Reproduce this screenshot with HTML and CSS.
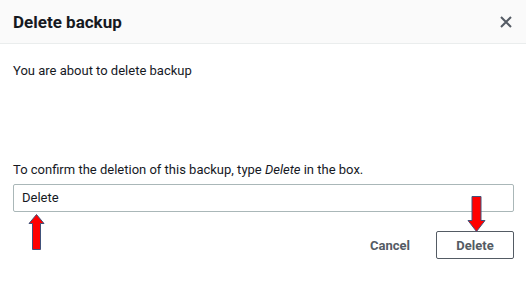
FILE: index.html
```html
<!DOCTYPE html>
<html>
<head>
<meta charset="utf-8">
<link rel="stylesheet" href="styles.css">
</head>
<body>
<div class="modal">
  <div class="header">
    <h2 class="title">Delete backup</h2>
    <button class="close" aria-label="Close">
      <svg width="12" height="12" viewBox="0 0 12 12"><path d="M1 1 L11 11 M11 1 L1 11" stroke="#545b64" stroke-width="2" fill="none"/></svg>
    </button>
  </div>
  <div class="content">
    <p class="intro">You are about to delete backup</p>
    <p class="confirm">To confirm the deletion of this backup, type <em>Delete</em> in the box.</p>
    <div class="field">
      <div class="input">Delete</div>
      <svg class="arrow arrow-up" width="17" height="36" viewBox="0 0 17 36"><path d="M8.5 0.5 L16 9.5 L12.5 9.5 L12.5 35.5 L4.5 35.5 L4.5 9.5 L1 9.5 Z" fill="#ff0000" stroke="#41527a" stroke-width="1"/></svg>
    </div>
    <div class="actions">
      <button class="btn-link">Cancel</button>
      <div class="btn-wrap">
        <button class="btn">Delete</button>
        <svg class="arrow arrow-down" width="19" height="36" viewBox="0 0 19 36"><path d="M9.5 35.5 L18 24.5 L14 24.5 L14 0.5 L5 0.5 L5 24.5 L1 24.5 Z" fill="#ff0000" stroke="#41527a" stroke-width="1"/></svg>
      </div>
    </div>
  </div>
</div>
</body>
</html>
```

FILE: styles.css
```css
* { box-sizing: border-box; }
html, body { margin: 0; padding: 0; background: #ffffff; }
body {
  font-family: Roboto, "Liberation Sans", sans-serif;
  color: #16191f;
  font-size: 13px;
}
.modal { width: 526px; height: 294px; }
.header {
  height: 44px;
  background: #fafafa;
  border-bottom: 1px solid #eaeded;
  display: flex;
  align-items: center;
  justify-content: space-between;
  padding: 0 14px 0 13px;
}
.title {
  margin: 0;
  font-size: 17px;
  font-weight: 700;
  line-height: 22px;
}
.close {
  border: 0;
  background: none;
  padding: 0;
  width: 12px;
  height: 12px;
  display: flex;
  cursor: pointer;
}
.content { padding: 0 12px 0 13px; }
.intro { margin: 0; padding-top: 17px; line-height: 20px; height: 116px; }
.confirm { margin: 0; line-height: 20px; height: 24px; }
.field { position: relative; }
.input {
  height: 28px;
  border: 1px solid #aab7b8;
  border-radius: 2px;
  padding: 0 8px;
  line-height: 26px;
}
.arrow { position: absolute; }
.arrow-up { left: 15px; top: 30px; }
.actions {
  display: flex;
  justify-content: flex-end;
  align-items: center;
  gap: 26px;
  margin-top: 19px;
}
.btn-link {
  border: 0;
  background: none;
  font: inherit;
  font-weight: 700;
  color: #545b64;
  padding: 0;
}
.btn-wrap { position: relative; }
.btn {
  width: 78px;
  height: 28px;
  border: 1px solid #545b64;
  border-radius: 2px;
  background: #fff;
  font: inherit;
  font-weight: 700;
  color: #545b64;
}
.arrow-down { left: 31px; top: -35px; }
```
